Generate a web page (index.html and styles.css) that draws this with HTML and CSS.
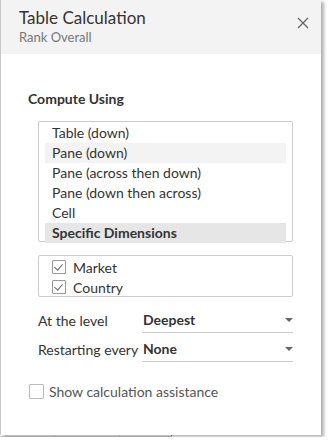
FILE: index.html
```html
<!DOCTYPE html>
<html lang="en">
<head>
  <meta charset="UTF-8">
  <meta name="viewport" content="width=device-width, initial-scale=1.0">
  <title>Table Calculation</title>
  <link rel="stylesheet" href="styles.css">
</head>
<body>
  <div class="panel">
    <div class="header">
      <div>
        <h1>Table Calculation</h1>
        <p class="subtitle">Rank Overall</p>
      </div>
      <span class="close">
        <svg width="12" height="12" viewBox="0 0 12 12"><path d="M1 1 L11 11 M11 1 L1 11" stroke="#666" stroke-width="1.3" fill="none"/></svg>
      </span>
    </div>

    <div class="content">
      <h3>Compute Using</h3>

      <ul class="listbox">
        <li>Table (down)</li>
        <li class="hover">Pane (down)</li>
        <li>Pane (across then down)</li>
        <li>Pane (down then across)</li>
        <li>Cell</li>
        <li class="selected">Specific Dimensions</li>
      </ul>

      <div class="dims">
        <label class="dim"><span class="box checked"></span>Market</label>
        <label class="dim"><span class="box checked"></span>Country</label>
      </div>

      <div class="field first">
        <span class="field-label">At the level</span>
        <span class="select">Deepest<i class="arrow"></i></span>
      </div>
      <div class="field">
        <span class="field-label">Restarting every</span>
        <span class="select">None<i class="arrow"></i></span>
      </div>

      <label class="assist"><span class="box"></span>Show calculation assistance</label>
    </div>
  </div>

  <div class="grid">
    <span></span><span></span><span class="dark"></span>
  </div>
</body>
</html>
```

FILE: styles.css
```css
body {
  margin: 0;
  background: #fff;
  font-family: Lato, "Open Sans", sans-serif;
  color: #333;
}

.panel {
  width: 320px;
  height: 435px;
  border-left: 1px solid #c8c8c8;
  background: #fff;
  box-shadow: 3px 2px 3px rgba(0, 0, 0, 0.3);
  position: relative;
  z-index: 1;
}

.header {
  background: #f3f3f3;
  height: 54px;
  padding: 0 0 0 18px;
  display: flex;
  justify-content: space-between;
  box-sizing: border-box;
}

h1 {
  font-size: 17px;
  font-weight: normal;
  color: #333;
  margin: 7px 0 0;
  line-height: 22px;
}

.subtitle {
  margin: 0;
  font-size: 13px;
  color: #777;
  line-height: 16px;
}

.close {
  margin: 13px 12px 0 0;
  width: 12px;
  height: 12px;
}

.content {
  padding: 37px 0 0 27px;
}

h3 {
  margin: 0 0 14px;
  font-size: 14px;
  font-weight: bold;
  line-height: 16px;
  color: #333;
}

.listbox {
  list-style: none;
  margin: 0 0 0 10px;
  padding: 1px 6px 0;
  width: 255px;
  height: 121px;
  border: 1px solid #ccc;
  border-radius: 2px;
  box-sizing: border-box;
}

.listbox li {
  height: 20px;
  line-height: 20px;
  padding-left: 7px;
  font-size: 14px;
  color: #333;
}

.listbox .hover {
  background: #f3f3f3;
}

.listbox .selected {
  background: #e6e6e6;
  font-weight: bold;
}

.dims {
  margin: 13px 0 0 10px;
  width: 255px;
  height: 42px;
  border: 1px solid #ccc;
  border-radius: 2px;
  box-sizing: border-box;
  padding: 1px 0 0 13px;
}

.dim {
  display: flex;
  align-items: center;
  height: 20px;
  font-size: 14px;
}

.box {
  width: 12px;
  height: 12px;
  border: 1px solid #999;
  border-radius: 1px;
  margin-right: 7px;
  position: relative;
  flex-shrink: 0;
}

.box.checked::after {
  content: "";
  position: absolute;
  left: 3px;
  top: 1px;
  width: 4px;
  height: 7px;
  border: solid #666;
  border-width: 0 1.4px 1.4px 0;
  transform: rotate(40deg);
}

.field {
  display: flex;
  align-items: flex-end;
  margin-left: 10px;
  height: 29px;
  font-size: 14px;
}

.field.first {
  margin-top: 7px;
}

.field-label {
  width: 104px;
  line-height: 18px;
  padding-bottom: 3px;
}

.select {
  width: 151px;
  border-bottom: 1px solid #ccc;
  font-weight: bold;
  line-height: 18px;
  padding: 0 0 3px 1px;
  position: relative;
  box-sizing: border-box;
}

.arrow {
  position: absolute;
  right: 0;
  top: 7px;
  border-left: 4px solid transparent;
  border-right: 4px solid transparent;
  border-top: 4px solid #666;
}

.assist {
  display: flex;
  align-items: center;
  margin: 21px 0 0 1px;
  font-size: 14px;
  color: #555;
}

.assist .box {
  width: 13px;
  height: 13px;
  border-color: #bbb;
  margin-right: 5px;
}

.grid {
  display: flex;
  width: 172px;
  height: 4px;
  border-bottom: 1px solid #ccc;
  margin-top: -3px;
}

.grid span {
  border-right: 1px solid #ddd;
}

.grid span:nth-child(1) { width: 54px; }
.grid span:nth-child(2) { width: 64px; }
.grid span:nth-child(3) { width: 51px; }

.grid .dark {
  border-right-color: #888;
}
```
